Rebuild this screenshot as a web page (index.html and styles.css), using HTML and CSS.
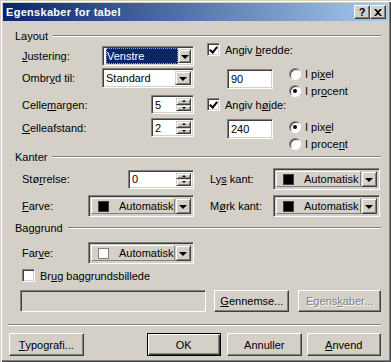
FILE: index.html
```html
<!DOCTYPE html>
<html lang="da">
<head>
<meta charset="UTF-8" />
<meta name="viewport" content="width=device-width, initial-scale=1.0"/>
<title>Egenskaber for tabel</title>
<link rel="stylesheet" href="styles.css">
</head>
<body>

<div class="dialog">
    <div class="titlebar">
        <span class="title">Egenskaber for tabel</span>
        <div class="caption-buttons">
            <span class="cap-btn help">?</span>
            <span class="cap-btn close">
                <svg width="8" height="7" viewBox="0 0 8 7"><path d="M0 0h2l2 2 2-2h2L5 3.5 8 7H6L4 5 2 7H0l3-3.5z" fill="#000"/></svg>
            </span>
        </div>
    </div>

    <div class="content">
        <!-- Layout -->
        <div class="group-head head-layout"><span>Layout</span><i class="etch"></i></div>
        <div class="layout-area">
            <div class="layout-left">
                <div class="row row-just">
                    <span class="lbl w80"><u>J</u>ustering:</span>
                    <div class="field combo w92">
                        <span class="value"><span class="selected">Venstre</span></span>
                        <span class="drop-btn"><i class="arrow"></i></span>
                    </div>
                </div>
                <div class="row row-ombr">
                    <span class="lbl w80">Ombr<u>y</u>d til:</span>
                    <div class="field combo w92">
                        <span class="value">Standard</span>
                        <span class="drop-btn"><i class="arrow"></i></span>
                    </div>
                </div>
                <div class="row row-cm">
                    <span class="lbl grow">Celle<u>m</u>argen:</span>
                    <div class="field spin w43">
                        <span class="value">5</span>
                        <span class="spin-btns"><i class="sb up"></i><i class="sb down"></i></span>
                    </div>
                </div>
                <div class="row row-ca">
                    <span class="lbl grow"><u>C</u>elleafstand:</span>
                    <div class="field spin w43">
                        <span class="value">2</span>
                        <span class="spin-btns"><i class="sb up"></i><i class="sb down"></i></span>
                    </div>
                </div>
            </div>

            <div class="layout-right">
                <div class="check-row cb-first">
                    <span class="checkbox checked"></span>
                    <span>Angiv <u>b</u>redde:</span>
                </div>
                <div class="opts opts-w">
                    <div class="field text w46"><span class="value">90</span></div>
                    <div class="radios">
                        <div class="radio-row"><span class="radio"></span><span>I pi<u>x</u>el</span></div>
                        <div class="radio-row"><span class="radio on"></span><span>I pr<u>o</u>cent</span></div>
                    </div>
                </div>
                <div class="check-row cb-second">
                    <span class="checkbox checked"></span>
                    <span>Angiv h<u>ø</u>jde:</span>
                </div>
                <div class="opts opts-h">
                    <div class="field text w46"><span class="value">240</span></div>
                    <div class="radios">
                        <div class="radio-row"><span class="radio on"></span><span>I pix<u>e</u>l</span></div>
                        <div class="radio-row"><span class="radio"></span><span>I proce<u>n</u>t</span></div>
                    </div>
                </div>
            </div>
        </div>

        <!-- Kanter -->
        <div class="group-head"><span>Kanter</span><i class="etch"></i></div>
        <div class="borders-grid">
            <div class="row">
                <span class="lbl grow">St&oslash;<u>r</u>relse:</span>
                <div class="field spin w66">
                    <span class="value">0</span>
                    <span class="spin-btns"><i class="sb up"></i><i class="sb down"></i></span>
                </div>
            </div>
            <div class="row">
                <span class="lbl w63">Ly<u>s</u> kant:</span>
                <div class="field color w107">
                    <span class="color-value"><i class="swatch black"></i>Automatisk</span>
                    <span class="drop-btn"><i class="arrow"></i></span>
                </div>
            </div>
            <div class="row">
                <span class="lbl w66"><u>F</u>arve:</span>
                <div class="field color w106">
                    <span class="color-value"><i class="swatch black"></i>Automatisk</span>
                    <span class="drop-btn"><i class="arrow"></i></span>
                </div>
            </div>
            <div class="row">
                <span class="lbl w63">M<u>ø</u>rk kant:</span>
                <div class="field color w107">
                    <span class="color-value"><i class="swatch black"></i>Automatisk</span>
                    <span class="drop-btn"><i class="arrow"></i></span>
                </div>
            </div>
        </div>

        <!-- Baggrund -->
        <div class="group-head head-bg"><span>Baggrund</span><i class="etch"></i></div>
        <div class="row row-bgcolor">
            <span class="lbl w66">Far<u>v</u>e:</span>
            <div class="field color w106">
                <span class="color-value"><i class="swatch white"></i>Automatisk</span>
                <span class="drop-btn"><i class="arrow"></i></span>
            </div>
        </div>
        <div class="check-row row-bgimg">
            <span class="checkbox"></span>
            <span>Br<u>u</u>g baggrundsbillede</span>
        </div>
        <div class="file-row">
            <div class="field text disabled w187"></div>
            <span class="btn w75 browse"><u>G</u>ennemse...</span>
            <span class="btn w83 props disabled">Egens<u>k</u>aber...</span>
        </div>

        <i class="separator"></i>

        <div class="button-row">
            <span class="btn w75 b-typo"><u>T</u>ypografi...</span>
            <span class="btn w75 b-ok default">OK</span>
            <span class="btn w75 b-cancel">Annuller</span>
            <span class="btn w75 b-apply"><u>A</u>nvend</span>
        </div>
    </div>
</div>

</body>
</html>
```

FILE: styles.css
```css
body {
    margin: 0;
    padding: 0;
    background: #d4d0c8;
    font-family: "Liberation Sans", Arial, sans-serif;
    font-size: 11px;
    color: #000;
}

.dialog {
    width: 391px;
    height: 362px;
    box-sizing: border-box;
    padding: 3px;
    background: #d4d0c8;
    box-shadow: inset 1px 1px 0 #d4d0c8, inset 2px 2px 0 #fff,
                inset -1px -1px 0 #404040, inset -2px -2px 0 #808080;
}

/* title bar */
.titlebar {
    height: 18px;
    display: flex;
    align-items: center;
    padding: 0 2px 0 3px;
    background: linear-gradient(to right, #0a246a, #a6caf0);
}

.title {
    flex: 1;
    color: #fff;
    font-weight: bold;
    font-size: 11px;
    letter-spacing: 0.3px;
}

.caption-buttons {
    display: flex;
}

.cap-btn {
    width: 16px;
    height: 14px;
    box-sizing: border-box;
    display: flex;
    align-items: center;
    justify-content: center;
    background: #d4d0c8;
    border: 1px solid;
    border-color: #fff #404040 #404040 #fff;
    box-shadow: inset -1px -1px 0 #808080;
    font-weight: bold;
    font-size: 11px;
    line-height: 1;
}

/* content */
.content {
    padding: 0 7px 0 5px;
}

.group-head {
    display: flex;
    align-items: center;
    height: 13px;
    margin-left: 7px;
}

.head-layout { margin-top: 8px; }

.group-head span {
    padding-right: 5px;
}

.etch {
    flex: 1;
    height: 0;
    border-top: 1px solid #808080;
    border-bottom: 1px solid #fff;
}

.row {
    display: flex;
    align-items: center;
}

.lbl.grow { flex: 1; }
.w63 { width: 63px; }
.w66 { width: 66px; }
.w80 { width: 80px; }

/* sunken fields */
.field {
    box-sizing: border-box;
    display: flex;
    align-items: stretch;
    background: #fff;
    border: 1px solid;
    border-color: #808080 #fff #fff #808080;
    box-shadow: inset 1px 1px 0 #404040, inset -1px -1px 0 #d4d0c8;
    padding: 2px;
}

.w43 { width: 43px; }
.w46 { width: 46px; }
.w66.field { width: 66px; }
.w92 { width: 92px; }
.w106 { width: 106px; }
.w107 { width: 107px; }
.w187 { width: 187px; }
.w75 { width: 75px; }
.w83 { width: 83px; }

.field .value {
    flex: 1;
    display: flex;
    align-items: center;
    padding-left: 1px;
    white-space: nowrap;
    font-size: 11px;
}

.combo { height: 20px; }

.selected {
    background: #0a246a;
    color: #fff;
    outline: 1px dotted #a6a6a6;
    outline-offset: -1px;
    padding: 2px 2px 2px 1px;
    width: 69px;
}

.drop-btn {
    width: 16px;
    box-sizing: border-box;
    display: flex;
    align-items: center;
    justify-content: center;
    background: #d4d0c8;
    border: 1px solid;
    border-color: #d4d0c8 #404040 #404040 #d4d0c8;
    box-shadow: inset 1px 1px 0 #fff, inset -1px -1px 0 #808080;
}

.arrow {
    width: 0;
    height: 0;
    border-left: 4px solid transparent;
    border-right: 4px solid transparent;
    border-top: 4px solid #000;
    margin-top: 1px;
}

.spin { height: 19px; }

.spin-btns {
    width: 15px;
    display: flex;
    flex-direction: column;
}

.sb {
    flex: 1;
    box-sizing: border-box;
    display: flex;
    align-items: center;
    justify-content: center;
    background: #d4d0c8;
    border: 1px solid;
    border-color: #d4d0c8 #404040 #404040 #d4d0c8;
    box-shadow: inset 1px 1px 0 #fff, inset -1px -1px 0 #808080;
}

.sb::after {
    content: "";
    width: 0;
    height: 0;
    border-left: 2px solid transparent;
    border-right: 2px solid transparent;
}

.sb.up::after { border-bottom: 2px solid #000; }
.sb.down::after { border-top: 2px solid #000; }

.text { height: 20px; }

.field.disabled {
    background: #d4d0c8;
    height: 22px;
}

/* colour picker field */
.color {
    height: 22px;
    background: #d4d0c8;
    padding: 2px;
}

.color-value {
    flex: 1;
    display: flex;
    align-items: center;
    padding-left: 6px;
    font-size: 11px;
    white-space: nowrap;
    border: 1px solid;
    border-color: #fff #808080 #808080 #fff;
}

.swatch {
    width: 11px;
    height: 11px;
    box-sizing: border-box;
    margin-right: 10px;
}

.swatch.black {
    background: #000;
    border: 1px solid #404040;
}

.swatch.white {
    background: #fff;
    border: 1px solid #808080;
}

/* Layout section */
.layout-area {
    display: flex;
    height: 108px;
}

.layout-left {
    width: 172px;
    margin-left: 14px;
}

.row-just { margin-top: 4px; height: 20px; }
.row-ombr { margin-top: 2px; height: 20px; }
.row-cm { margin-top: 7px; height: 19px; }
.row-ca { margin-top: 4px; height: 19px; }

.layout-right {
    margin-left: 13px;
    flex: 1;
}

.check-row {
    display: flex;
    align-items: center;
    height: 13px;
}

.check-row .checkbox {
    margin-right: 5px;
}

.checkbox {
    width: 13px;
    height: 13px;
    box-sizing: border-box;
    background: #fff;
    border: 1px solid;
    border-color: #808080 #fff #fff #808080;
    box-shadow: inset 1px 1px 0 #404040, inset -1px -1px 0 #d4d0c8;
    position: relative;
}

.checkbox.checked::after {
    content: "";
    position: absolute;
    left: 3px;
    top: 1px;
    width: 3px;
    height: 6px;
    border: solid #000;
    border-width: 0 2px 2px 0;
    transform: rotate(40deg);
}

.cb-first { margin-top: 1px; }

.opts {
    display: flex;
    align-items: flex-start;
}

.opts .text {
    margin-left: 20px;
}

.opts-w { margin-top: 12px; }
.opts-w .text { margin-top: 1px; }
.cb-second { margin-top: 1px; }
.opts-h { margin-top: 8px; }
.opts-h .radios { padding-top: 2px; }

.radios {
    margin-left: 16px;
    display: flex;
    flex-direction: column;
    gap: 5px;
}

.radio-row {
    display: flex;
    align-items: center;
    height: 12px;
}

.radio {
    width: 12px;
    height: 12px;
    box-sizing: border-box;
    border-radius: 50%;
    background: #fff;
    border: 1px solid;
    border-color: #808080 #fff #fff #808080;
    box-shadow: inset 1px 1px 0 #404040;
    margin-right: 4px;
    display: flex;
    align-items: center;
    justify-content: center;
}

.radio.on::after {
    content: "";
    width: 4px;
    height: 4px;
    border-radius: 50%;
    background: #000;
}

/* Kanter section */
.borders-grid {
    display: grid;
    grid-template-columns: 172px 170px;
    grid-auto-rows: 22px;
    column-gap: 16px;
    row-gap: 5px;
    margin-top: 5px;
    margin-left: 14px;
}

/* Baggrund section */
.head-bg { margin-top: 4px; }

.row-bgcolor {
    margin-top: 8px;
    margin-left: 14px;
    height: 22px;
}

.row-bgimg {
    margin-top: 5px;
    margin-left: 14px;
}

.file-row {
    display: flex;
    margin-top: 8px;
    margin-left: 12px;
    height: 22px;
}

.browse { margin-left: 8px; }
.props { margin-left: 9px; }

/* buttons */
.btn {
    box-sizing: border-box;
    display: flex;
    align-items: center;
    justify-content: center;
    height: 22px;
    background: #d4d0c8;
    border: 1px solid;
    border-color: #fff #404040 #404040 #fff;
    box-shadow: inset -1px -1px 0 #808080, inset 1px 1px 0 #d4d0c8;
    font-size: 11px;
}

.btn.disabled {
    color: #808080;
    text-shadow: 1px 1px 0 #fff;
}

.btn.default {
    border: 1px solid #000;
    box-shadow: inset 1px 1px 0 #fff, inset -1px -1px 0 #404040, inset -2px -2px 0 #808080;
}

.separator {
    display: block;
    height: 0;
    margin-top: 12px;
    border-top: 1px solid #808080;
    border-bottom: 1px solid #fff;
}

.button-row {
    display: flex;
    margin-top: 7px;
}

.button-row .btn { height: 23px; }
.b-typo { margin-left: 1px; }
.b-ok { margin-left: 63px; }
.b-cancel { margin-left: 6px; }
.b-apply { margin-left: 5px; }
```
